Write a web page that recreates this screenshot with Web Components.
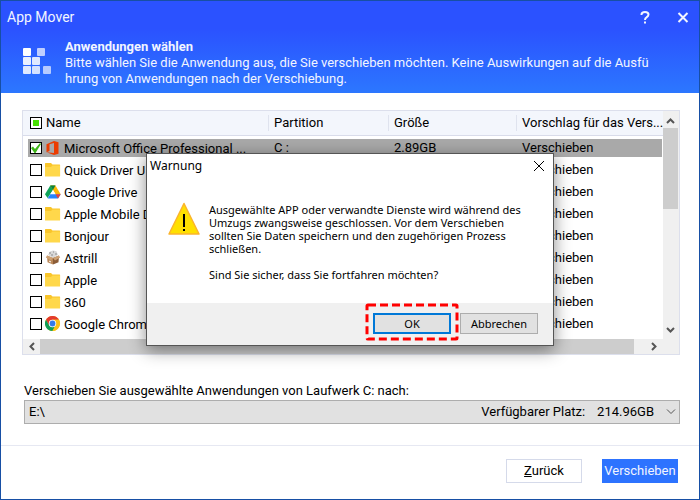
<!DOCTYPE html>
<html lang="de">
<head>
<meta charset="utf-8">
<title>App Mover</title>
<style>
  body { margin: 0; font: 13px/16px Roboto, "Liberation Sans", sans-serif; color: #000; background: #fff; }
</style>
</head>
<body>
<app-window>
  <app-header slot="header"></app-header>
  <app-list></app-list>
  <drive-picker></drive-picker>
  <app-footer slot="footer"></app-footer>
  <warning-dialog slot="overlay" role="dialog" aria-label="Warnung">
    <p>Ausgewählte APP oder verwandte Dienste wird während des<br>Umzugs zwangsweise geschlossen. Vor dem Verschieben<br>sollten Sie Daten speichern und den zugehörigen Prozess<br>schließen.</p>
    <p>Sind Sie sicher, dass Sie fortfahren möchten?</p>
  </warning-dialog>
</app-window>
<script>
const define = (name, html) => customElements.define(name, class extends HTMLElement {
  constructor() {
    super();
    this.attachShadow({ mode: 'open' }).innerHTML = html;
  }
});

define('app-window', `
<style>
  :host { display: flex; flex-direction: column; position: relative; box-sizing: border-box; min-height: 100vh; border: 1px solid #174fa5; background: #fff; }
  main { flex: 1; padding: 17px 19px 20px 21px; }
</style>
<slot name="header"></slot>
<main><slot></slot></main>
<slot name="footer"></slot>
<slot name="overlay"></slot>`);

define('app-header', `
<style>
  :host { display: block; padding: 8px 9px 6px 6px; color: #f2f5ff; background: linear-gradient(#2b52ff 30%, #2c77ff); }
  .bar { display: flex; align-items: center; gap: 24px; height: 16px; }
  h1 { flex: 1; margin: 0; font-size: 14px; font-weight: 400; }
  button { display: block; width: 14px; height: 14px; padding: 0; border: 0; background: none; color: inherit; }
  button svg { display: block; }
  .intro { display: flex; gap: 10px; padding: 14px 0 0 16px; }
  .intro > svg { flex: none; margin-top: 9px; }
  h2 { margin: 0; font-size: 13px; font-weight: 700; }
  p { margin: 0; white-space: nowrap; }
</style>
<div class="bar">
  <h1>App Mover</h1>
  <button aria-label="Hilfe"><svg width="14" height="14" fill="none" stroke="currentColor" stroke-width="2"><path d="M3.5 5V4.5Q3.5 2 7 2t3.500 2.500q0 1.500-2 2.800Q7 8.200 7 10M7 11.500v2"/></svg></button>
  <button aria-label="Schließen"><svg width="14" height="14" fill="none" stroke="currentColor" stroke-width="2"><path d="M2.500 3l9 9M11.500 3l-9 9"/></svg></button>
</div>
<div class="intro">
  <svg width="32" height="27" viewBox="0 0 32 27" fill="#fff"><rect x="0" y="0" width="8" height="8" rx="1"/><rect x="14" y="0" width="8" height="8" rx="1" opacity=".7"/><rect x="0" y="9" width="8" height="8" rx="1" opacity=".9"/><rect x="9" y="9" width="8" height="8" rx="1" opacity=".85"/><rect x="0" y="18" width="8" height="8" rx="1" opacity=".85"/><rect x="9" y="18" width="8" height="8" rx="1" opacity=".8"/><rect x="20" y="18" width="8" height="8" rx="1" opacity=".65"/></svg>
  <div>
    <h2>Anwendungen wählen</h2>
    <p>Bitte wählen Sie die Anwendung aus, die Sie verschieben möchten. Keine Auswirkungen auf die Ausfü<br>hrung von Anwendungen nach der Verschiebung.</p>
  </div>
</div>`);

const icons = {
  folder: '<path d="M0 1.500Q0 1 .6 1H6l1.500 1.500H14.500q.6 0 .6.6V14H0z" fill="#f9c52b"/><path d="M0 5H6l1.500-1.500H15V14.500H0z" fill="#ffd84b"/>',
  office: '<path d="M1.500 4.200 9 1l4.500 1.300v11.400L9 15l-7.500-2.800L9 13V3L4.500 4.200v6.800l-3 1.200z" fill="#eb3c00"/>',
  drive: '<path d="M5.300 1.500h5.100L8 6 2.600 14 0 10.200z" fill="#11a45b"/><path d="M5.300 1.500h5.100L15.700 10.200H10.500z" fill="#fbb808"/><path d="M5.300 1.500h5.100L8 6z" fill="#0a8043"/><path d="M8 6l2.500 4.200H5.200z" fill="#fff"/><path d="M5.200 10.200h10.500L13 14.500H2.600z" fill="#2684fc"/><path d="M10.500 10.200h5.200L13 14.500z" fill="#ea4335"/>',
  box: '<path d="M3 5 5 1.500l3-1 3.500.8L13 5 8 8z" fill="#d9d9d9"/><path d="M4 3h2M8 2h1M10 4h2M6 5h2" stroke="#8d8d8d"/><path d="M2 5.500 8 8v6.500l-5.500-2.300z" fill="#b98757"/><path d="M8 8l6-2.500-.5 6.700L8 14.500z" fill="#8b5c37"/><path d="M2 5.500 8 8l-2 2.500L.8 7.500zM14 5.500 8 8l2 2.500 5.200-3z" fill="#cda072"/><path d="M4 11l2 1" stroke="#fff"/>',
  chrome: '<circle cx="7.500" cy="7.500" r="7.500" fill="#fbc116"/><path d="M1 3.750A7.500 7.500 0 0 1 14 3.750H7.500L4.250 9.400z" fill="#e33b2e"/><path d="M1 3.750 4.250 9.400 7.500 11.250 10 10 7.500 15A7.500 7.500 0 0 1 1 3.750z" fill="#109d58"/><path d="M7.500 3.750H14A7.500 7.500 0 0 1 7.500 15L10.750 9.400z" fill="#fbc116"/><circle cx="7.500" cy="7.500" r="3.700" fill="#fff"/><circle cx="7.500" cy="7.500" r="2.900" fill="#357ae8"/>'
};
const apps = [
  ['office', 'Microsoft Office Professional ...', 'C :', '2.89GB'],
  ['folder', 'Quick Driver U'],
  ['drive', 'Google Drive'],
  ['folder', 'Apple Mobile D'],
  ['folder', 'Bonjour'],
  ['box', 'Astrill'],
  ['folder', 'Apple'],
  ['folder', '360'],
  ['chrome', 'Google Chrom']
];
const row = ([icon, name, part = '', size = ''], i) => `
<tr class="${i ? '' : 'selected'}">
  <td><label><input type="checkbox" ${i ? '' : 'checked'}><svg width="16" height="16" fill="none" aria-hidden="true">${icons[icon]}</svg><span>${name}</span></label></td>
  <td>${part}</td><td>${size}</td><td>Verschieben</td>
</tr>`;
const arrow = d => `<svg width="17" height="15" fill="none" stroke="#555" stroke-width="2"><path d="${d}"/></svg>`;

define('app-list', `
<style>
  :host { display: grid; grid-template-columns: 1fr 15px; border: 1px solid #dcdfec; padding-right: 1px; background: #f0f0f0; }
  .view { background: #fff; padding-bottom: 5px; overflow: hidden; }
  table { width: 100%; table-layout: fixed; border-collapse: separate; border-spacing: 0; }
  .name { width: 245px; } .part { width: 120px; } .size { width: 128px; }
  th { height: 24px; padding: 0 0 0 6px; border-bottom: 1px solid #d9dcea; background: #f3f6fc linear-gradient(#dfe3ee, #dfe3ee) no-repeat 0 4px / 1px 16px; font-weight: 400; text-align: left; white-space: nowrap; overflow: hidden; }
  th:first-child { padding-left: 7px; background-image: none; }
  td { height: 18px; padding: 3px 0 1px; white-space: nowrap; line-height: 18px; }
  td:not(:first-child) { text-indent: 6px; }
  td:first-child { padding-left: 5px; }
  td:last-child { padding-right: 1px; }
  .selected td { background: #a9a9a9; background-clip: content-box; }
  label { display: flex; align-items: center; height: 18px; padding-left: 2px; }
  td svg { margin: 0 3px; }
  td span { padding-top: 2px; }
  th label { gap: 4px; padding: 0; }
  input { appearance: none; flex: none; box-sizing: border-box; width: 12px; height: 12px; margin: 0; border: 1px solid #000; background: #fff; }
  input::before { content: ""; display: block; width: 10px; height: 10px; }
  input:checked::before { background: #3fb618; clip-path: polygon(0 50%, 20% 35%, 40% 60%, 90% 0, 100% 10%, 45% 100%, 35% 100%); }
  .all::before { box-sizing: border-box; border: 2px solid #fff; background: #46e000; }
  .v { display: flex; flex-direction: column; align-items: center; }
  .v .track { flex: 1; width: 15px; }
  .v .thumb { width: 15px; height: 42%; background: #cdcdcd; }
  .h { display: flex; height: 15px; }
  .h .track { flex: 1; }
  .h .thumb { width: 98%; height: 15px; background: #cdcdcd; }
  .bar button { display: block; padding: 0; border: 0; background: none; width: 17px; height: 15px; }
  .v button { width: 15px; height: 17px; }
  .bar svg { display: block; }
</style>
<div class="view">
  <table>
    <colgroup><col class="name"><col class="part"><col class="size"><col></colgroup>
    <thead><tr><th><label><input type="checkbox" class="all">Name</label></th><th>Partition</th><th>Größe</th><th>Vorschlag für das Vers...</th></tr></thead>
    <tbody>${apps.map(row).join('')}</tbody>
  </table>
</div>
<div class="bar v"><button aria-label="Nach oben">${arrow('M4 11l3.500-3.500L11 11')}</button><div class="track"><div class="thumb"></div></div><button aria-label="Nach unten">${arrow('M4 5l3.500 3.500L11 5')}</button></div>
<div class="bar h"><button aria-label="Nach links">${arrow('M11 4L7.500 7.500 11 11')}</button><div class="track"><div class="thumb"></div></div><button aria-label="Nach rechts">${arrow('M6 4l3.500 3.500L6 11')}</button></div>`);

define('drive-picker', `
<style>
  :host { display: block; padding: 28px 0 0 2px; }
  label { display: block; margin-bottom: 1px; }
  .box { display: grid; align-items: center; }
  .box > * { grid-area: 1 / 1; }
  select { appearance: none; box-sizing: border-box; width: 100%; height: 24px; margin: 0; padding: 0 4px; border: 1px solid #adadad; border-radius: 0; background: #e1e1e1; font: inherit; color: #000; }
  .info { display: flex; gap: 12px; justify-self: end; align-items: center; padding-right: 4px; pointer-events: none; }
</style>
<label for="drive">Verschieben Sie ausgewählte Anwendungen von Laufwerk C: nach:</label>
<div class="box">
  <select id="drive"><option>E:\\</option></select>
  <div class="info"><span>Verfügbarer Platz:</span><span>214.96GB</span><svg width="10" height="6" fill="none" stroke="#555"><path d="M1 .5l4 4 4-4"/></svg></div>
</div>`);

define('app-footer', `
<style>
  :host { display: flex; justify-content: flex-end; gap: 20px; padding: 13px 21px 16px; border-top: 1px solid #e6e8f2; }
  button { box-sizing: border-box; width: 76px; height: 24px; padding: 0; border: 1px solid #d5daea; background: #fff; font: inherit; color: #000; }
  .primary { border-color: #2d73ff; background: #2d73ff; color: #f2f5ff; }
</style>
<button><u>Z</u>urück</button><button class="primary">Verschieben</button>`);

define('warning-dialog', `
<style>
  :host { position: absolute; left: 50%; top: 152px; transform: translateX(-50%); box-sizing: border-box; width: 408px; border: 1px solid #555; background: #fff; box-shadow: 0 4px 16px rgba(0,0,0,.45); font: 12px/13px "Noto Sans", "Open Sans", sans-serif; }
  header { display: flex; align-items: center; justify-content: space-between; padding: 5px 8px 0 3px; }
  h2 { margin: 0; font-size: 12px; font-weight: 400; }
  header button { display: block; padding: 0; border: 0; background: none; }
  header svg { display: block; }
  .body { display: flex; gap: 9px; padding: 31px 10px 22px 21px; font-size: 11px; }
  .body svg { flex: none; margin-top: -1px; }
  .text { white-space: nowrap; }
  ::slotted(p) { margin: 0 0 13px; }
  ::slotted(p:last-child) { margin: 0; }
  footer { display: flex; justify-content: flex-end; gap: 9px; padding: 10px 15px 11px; background: #f0f0f0; }
  footer button { box-sizing: border-box; width: 78px; height: 21px; padding: 0; border: 1px solid #adadad; background: #e1e1e1; font: 11px/13px "Noto Sans", "Open Sans", sans-serif; color: #000; }
  .ok { position: relative; }
  .ok button { display: block; border: 2px solid #0078d7; }
  .ok svg { position: absolute; left: -8px; top: -10px; pointer-events: none; }
</style>
<header><h2>Warnung</h2><button aria-label="Schließen"><svg width="12" height="12" fill="none" stroke="#000"><path d="M1 1l10 10M11 1L1 11"/></svg></button></header>
<div class="body">
  <svg width="32" height="33" viewBox="0 0 32 33"><path d="M16 1.500 31 32H1z" fill="#ffe000" stroke="#fbb42c" stroke-width="1.500" stroke-linejoin="round"/><path d="M15 12h2v13h-2zM15 27h2v2h-2z"/></svg>
  <div class="text"><slot></slot></div>
</div>
<footer><div class="ok"><button>OK</button><svg width="94" height="38" fill="none" stroke="#f00" stroke-width="3" stroke-dasharray="8 4" stroke-linecap="butt"><rect x="2" y="2" width="90" height="34" rx="1"/></svg></div><button>Abbrechen</button></footer>`);
</script>
</body>
</html>
